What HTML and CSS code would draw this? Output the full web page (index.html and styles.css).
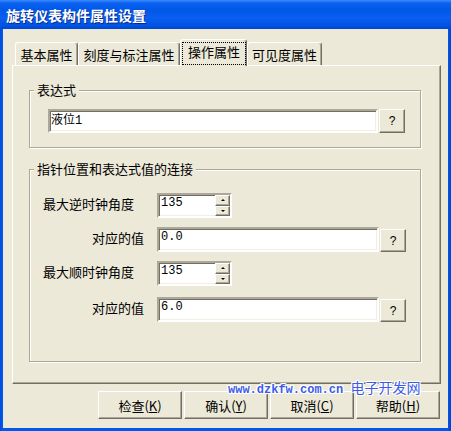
FILE: index.html
```html
<!DOCTYPE html>
<html lang="zh-CN">
<head>
    <meta charset="UTF-8">
    <title>旋转仪表构件属性设置</title>
    <link rel="stylesheet" href="styles.css">
</head>
<body>
<div class="window">
    <div class="titlebar">旋转仪表构件属性设置</div>
    <div class="client">
        <div class="tabs">
            <div class="tab tab-basic">基本属性</div>
            <div class="tab tab-scale">刻度与标注属性</div>
            <div class="tab tab-op active"><span class="focus">操作属性</span></div>
            <div class="tab tab-visible">可见度属性</div>
        </div>

        <div class="panel">
            <div class="group group-expr">
                <div class="group-title">表达式</div>
                <div class="field-row">
                    <input type="text" class="edit edit-expr" value="液位1">
                    <button type="button" class="qbtn qbtn-tall">?</button>
                </div>
            </div>

            <div class="group group-link">
                <div class="group-title">指针位置和表达式值的连接</div>
                <div class="form-grid">
                    <label>最大逆时钟角度</label>
                    <div class="spin">
                        <input type="text" value="135">
                        <div class="spin-btns"><span class="up"></span><span class="down"></span></div>
                    </div>

                    <label class="right">对应的值</label>
                    <div class="field-row">
                        <input type="text" class="edit edit-value" value="0.0">
                        <button type="button" class="qbtn">?</button>
                    </div>

                    <label>最大顺时钟角度</label>
                    <div class="spin">
                        <input type="text" value="135">
                        <div class="spin-btns"><span class="up"></span><span class="down"></span></div>
                    </div>

                    <label class="right last">对应的值</label>
                    <div class="field-row last">
                        <input type="text" class="edit edit-value" value="6.0">
                        <button type="button" class="qbtn">?</button>
                    </div>
                </div>
            </div>
        </div>

        <div class="buttons">
            <button type="button" class="btn">检查(<u>K</u>)</button>
            <button type="button" class="btn">确认(<u>Y</u>)</button>
            <button type="button" class="btn">取消(<u>C</u>)</button>
            <button type="button" class="btn">帮助(<u>H</u>)</button>
        </div>

        <div class="watermark">www.dzkfw.com.cn <span>电子开发网</span></div>
    </div>
</div>
</body>
</html>
```
FILE: styles.css
```css
* {
    box-sizing: border-box;
}
body {
    margin: 0;
    width: 451px;
    height: 431px;
    overflow: hidden;
    font-family: "Noto Sans CJK SC", "Noto Sans", sans-serif;
    font-size: 13px;
    color: #000;
    background: #0050e0;
}
.window {
    width: 451px;
    height: 431px;
    display: flex;
    flex-direction: column;
    background: linear-gradient(to right, #0048d8, #0058ee 2px, #0058ee 448px, #0040c8);
}
.titlebar {
    height: 29px;
    padding: 2px 0 0 6px;
    line-height: 27px;
    font-size: 14px;
    font-weight: bold;
    color: #fff;
    text-shadow: 1px 1px 0 #0a2a8a;
    background: linear-gradient(to bottom, #3d8cff 0, #0a62f0 3px, #0057e8 10px, #0a5ef0 18px, #0052e0 26px, #0046d4 29px);
}
.client {
    flex: 1;
    margin: 0 3px 3px;
    padding: 10px 7px 9px 9px;
    background: #ece9d8;
    display: flex;
    flex-direction: column;
    position: relative;
}

/* tabs */
.tabs {
    display: flex;
    align-items: flex-end;
    height: 26px;
    padding-left: 3px;
    position: relative;
    z-index: 1;
}
.tab {
    height: 23px;
    border: 1px solid;
    border-color: #fff #716f64 transparent #fff;
    border-bottom: 0;
    border-radius: 3px 3px 0 0;
    box-shadow: inset -1px 0 #aca899;
    text-align: center;
    line-height: 20px;
    padding-top: 2px;
    white-space: nowrap;
}
.tab-basic { width: 63px; }
.tab-scale { width: 102px; }
.tab-op { width: 67px; }
.tab-visible { width: 75px; }
.tab.active {
    height: 27px;
    margin-bottom: -1px;
    padding-top: 0;
    background: #ece9d8;
}
.focus {
    display: block;
    width: 64px;
    height: 23px;
    margin: 2px 0 0 1px;
    border: 1px dotted #000;
    line-height: 18px;
}

/* panel */
.panel {
    height: 319px;
    border: 1px solid;
    border-color: #fff #716f64 #716f64 #fff;
    box-shadow: inset -1px -1px #aca899;
    padding: 24px 0 0 16px;
}
.group {
    position: relative;
    width: 392px;
    border: 1px solid #aca899;
    box-shadow: inset 1px 1px #fff, 1px 1px #fff;
}
.group-expr {
    height: 58px;
    padding: 18px 0 0 18px;
}
.group-link {
    height: 193px;
    margin-top: 21px;
    padding: 23px 0 0 13px;
}
.group-title {
    position: absolute;
    top: -9px;
    left: 4px;
    padding: 0 3px;
    line-height: 16px;
    background: #ece9d8;
}

/* fields */
.field-row {
    display: flex;
    align-items: flex-end;
    gap: 1px;
}
.edit {
    height: 25px;
    border: 2px solid;
    border-color: #aca899 #fff #fff #aca899;
    box-shadow: inset 1px 1px #716f64, inset -1px -1px #f1efe2;
    background: #fff;
    padding: 0 2px 5px 2px;
    font: 12px "Liberation Mono", "Noto Sans CJK SC", monospace;
    color: #000;
    outline: none;
}
.edit-expr {
    width: 330px;
    height: 24px;
    padding: 0 1px 4px 1px;
}
.edit-value {
    width: 222px;
}
.qbtn {
    width: 26px;
    height: 23px;
    padding: 0;
    background: #ece9d8;
    border: 1px solid;
    border-color: #fff #716f64 #716f64 #fff;
    box-shadow: inset -1px -1px #aca899;
    font: 12px "Liberation Sans", sans-serif;
    color: #000;
}
.qbtn-tall {
    height: 24px;
}
.form-grid {
    display: grid;
    grid-template-columns: 101px auto;
    column-gap: 13px;
    row-gap: 9px;
    align-items: center;
}
.form-grid label {
    line-height: 16px;
    padding-bottom: 3px;
    white-space: nowrap;
}
.form-grid label.right {
    text-align: right;
}
.form-grid .last {
    margin-top: 2px;
}
.spin {
    display: flex;
    width: 75px;
    height: 25px;
    border: 2px solid;
    border-color: #aca899 #fff #fff #aca899;
    box-shadow: inset 1px 1px #716f64, inset -1px -1px #f1efe2;
    background: #fff;
}
.spin input {
    flex: 1;
    min-width: 0;
    border: 0;
    padding: 0 2px 5px 2px;
    font: 12px "Liberation Mono", monospace;
    background: transparent;
    outline: none;
}
.spin-btns {
    width: 15px;
    display: flex;
    flex-direction: column;
}
.spin-btns span {
    flex: 1;
    display: flex;
    align-items: center;
    justify-content: center;
    background: #ece9d8;
    border: 1px solid;
    border-color: #fff #716f64 #716f64 #fff;
    box-shadow: inset -1px -1px #aca899;
}
.spin-btns .up::after,
.spin-btns .down::after {
    content: "";
    width: 0;
    height: 0;
    border-left: 2px solid transparent;
    border-right: 2px solid transparent;
}
.spin-btns .up::after {
    border-bottom: 2px solid #000;
}
.spin-btns .down::after {
    border-top: 2px solid #000;
}

/* bottom buttons */
.buttons {
    display: flex;
    justify-content: flex-end;
    gap: 2px;
    margin: 7px 1px 0 0;
}
.btn {
    width: 84px;
    height: 28px;
    padding: 2px 0 0;
    background: #ece9d8;
    border: 1px solid;
    border-color: #fff #716f64 #716f64 #fff;
    box-shadow: inset -1px -1px #aca899;
    font: 13px "Noto Sans CJK SC", sans-serif;
    line-height: 14px;
    color: #000;
}

.watermark {
    position: absolute;
    left: 225px;
    top: 351px;
    font: bold 12px "Liberation Mono", monospace;
    line-height: 14px;
    color: #3c5ce8;
    white-space: nowrap;
    text-shadow: 0 0 2px #fff, 0 0 2px #fff, 1px 1px 0 #fff, -1px -1px 0 #fff, 1px -1px 0 #fff, -1px 1px 0 #fff;
    z-index: 2;
}
.watermark span {
    font: 14px "Noto Sans CJK SC", sans-serif;
    line-height: 14px;
}
```
